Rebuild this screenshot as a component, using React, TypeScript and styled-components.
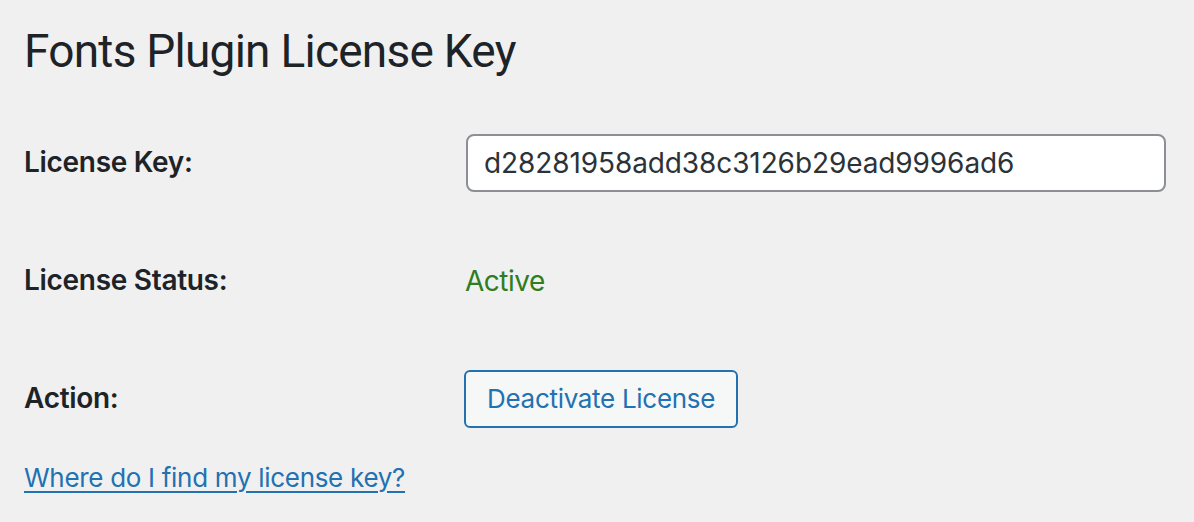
import React from "react";
import styled, { createGlobalStyle } from "styled-components";

const Global = createGlobalStyle`
  html, body { margin: 0; padding: 0; background: #f0f0f1; }
  body {
    font-family: Inter, "Noto Sans", sans-serif;
    color: #1d2327;
    -webkit-font-smoothing: antialiased;
  }
`;

const Page = styled.div`
  width: 1194px;
  height: 522px;
  box-sizing: border-box;
  padding: 22px 0 0 24px;
  overflow: hidden;
`;

const Title = styled.h1`
  margin: 0 0 22px 0;
  font-family: Roboto, "Noto Sans", sans-serif;
  font-size: 46px;
  font-weight: 400;
  line-height: 59.8px;
  letter-spacing: -0.75px;
  color: #1d2327;
`;

const Form = styled.div`
  display: grid;
  grid-template-columns: 442px 700px;
  grid-auto-rows: 118px;
`;

const Label = styled.div`
  align-self: start;
  padding-top: 40px;
  font-size: 28px;
  font-weight: 600;
  line-height: 36.4px;
  letter-spacing: -0.3px;
`;

const Value = styled.div`
  align-self: center;
  display: flex;
  align-items: center;
  font-size: 28px;
  line-height: 36.4px;
`;

const KeyInput = styled.input`
  box-sizing: border-box;
  width: 700px;
  height: 58px;
  padding: 0 16px;
  border: 2px solid #8c8f94;
  border-radius: 8px;
  background: #fff;
  font-family: inherit;
  font-size: 28px;
  letter-spacing: -0.1px;
  color: #2c3338;
  outline: none;
`;

const Status = styled.span<{ $active: boolean }>`
  margin-left: -1px;
  color: ${(p) => (p.$active ? "#2e7d1f" : "#b32d2e")};
  letter-spacing: -0.5px;
`;

const Button = styled.button`
  box-sizing: border-box;
  height: 58px;
  margin-left: -2px;
  padding: 0 21px;
  border: 2px solid #2271b1;
  border-radius: 6px;
  background: #f6f7f7;
  color: #2271b1;
  font-family: inherit;
  font-size: 26px;
  letter-spacing: -0.3px;
  cursor: pointer;
`;

const HelpLink = styled.a`
  display: inline-block;
  margin-top: 2px;
  font-size: 26px;
  line-height: 36.4px;
  letter-spacing: -0.3px;
  color: #2271b1;
  text-decoration: underline;
  text-underline-offset: 4px;
  text-decoration-thickness: 2px;
`;

export default function App() {
  return (
    <Page>
      <Global />
      <Title>Fonts Plugin License Key</Title>
      <Form>
        <Label>License Key:</Label>
        <Value>
          <KeyInput defaultValue="d28281958add38c3126b29ead9996ad6" />
        </Value>
        <Label>License Status:</Label>
        <Value>
          <Status $active>Active</Status>
        </Value>
        <Label>Action:</Label>
        <Value>
          <Button>Deactivate License</Button>
        </Value>
      </Form>
      <HelpLink href="#">Where do I find my license key?</HelpLink>
    </Page>
  );
}
